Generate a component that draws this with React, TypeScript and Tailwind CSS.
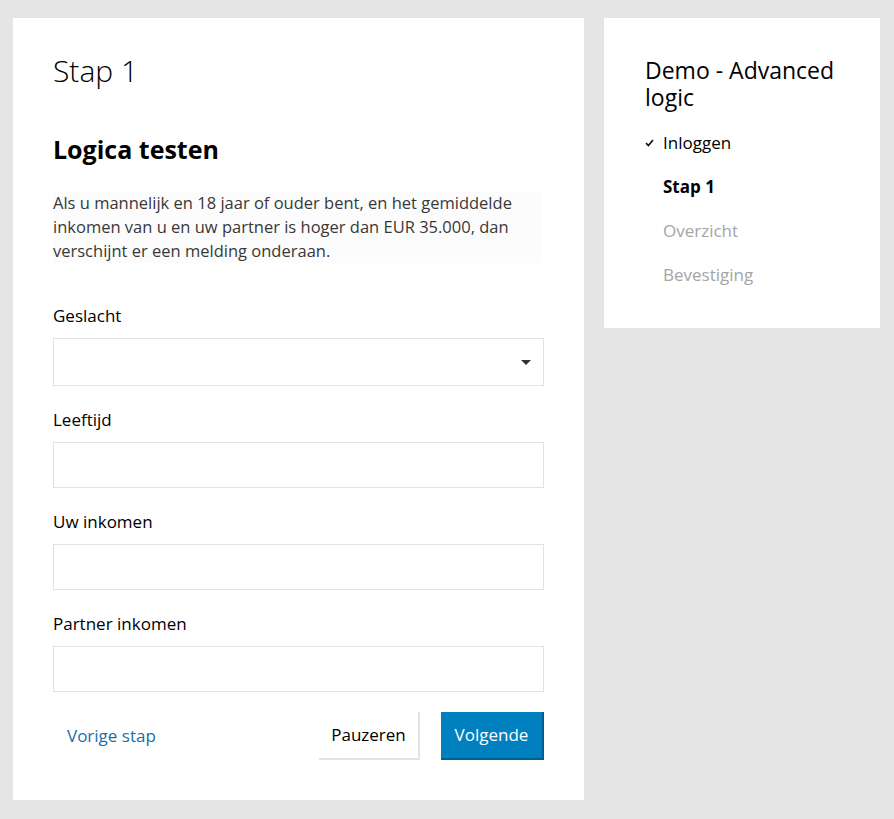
import React from 'react';

const font = { fontFamily: '"Open Sans", "Noto Sans", sans-serif' };

const fields = ['Leeftijd', 'Uw inkomen', 'Partner inkomen'];

const steps = [
  { label: 'Inloggen', state: 'done' },
  { label: 'Stap 1', state: 'current' },
  { label: 'Overzicht', state: 'todo' },
  { label: 'Bevestiging', state: 'todo' },
];

export default function App() {
  return (
    <div className="min-h-[819px] bg-[#e5e5e5]" style={font}>
      <div className="flex items-start gap-5 pl-[13px] pt-[18px]">
        <main className="w-[571px] bg-white px-10 pt-9 pb-10">
          <h1 className="text-[30px] font-light leading-[34px] text-black">Stap 1</h1>
          <h2 className="mt-[45px] text-[25px] font-bold leading-[32px] text-black">Logica testen</h2>
          <p className="mt-[26px] mr-[3px] bg-[#fcfcfc] text-[16.5px] leading-6 text-[#383838]">
            Als u mannelijk en 18 jaar of ouder bent, en het gemiddelde inkomen van u en uw partner is hoger dan EUR
            35.000, dan verschijnt er een melding onderaan.
          </p>

          <div className="mt-[41px]">
            <label className="block text-[17px] leading-6 text-black">Geslacht</label>
            <div className="relative mt-[10px] h-12 border border-[#e2e2e2] bg-white">
              <span className="absolute right-[12px] top-[21px] h-0 w-0 border-x-[5px] border-t-[5px] border-x-transparent border-t-[#333]" />
            </div>
          </div>

          {fields.map((f) => (
            <div key={f} className="mt-[22px]">
              <label className="block text-[17px] leading-6 text-black">{f}</label>
              <div className="mt-[10px] h-[46px] border border-[#e2e2e2] bg-white" />
            </div>
          ))}

          <div className="mt-5 flex items-center">
            <a className="ml-[14px] text-[17px] text-[#1c6ea4]">Vorige stap</a>
            <div className="ml-auto flex gap-[21px]">
              <button className="h-12 w-[101px] border-b-2 border-r-2 border-[#e2e2e2] bg-white text-[17px] text-black">
                Pauzeren
              </button>
              <button className="h-12 w-[103px] border-b-2 border-r-2 border-[#005f93] bg-[#0080bf] text-[17px] font-medium text-white">
                Volgende
              </button>
            </div>
          </div>
        </main>

        <aside className="w-[276px] bg-white pl-[41px] pr-5 pt-[39px] pb-[31px]">
          <h3 className="text-[23px] leading-[27px] text-black">Demo - Advanced logic</h3>
          <ul className="mt-[10px]">
            {steps.map((s) => (
              <li key={s.label} className="flex h-11 items-center text-[17px]">
                <span className="flex w-[18px] items-center">
                  {s.state === 'done' && (
                    <svg width="9" height="8" viewBox="0 0 9 8" fill="none">
                      <path d="M1 4.2 L3.4 6.5 L8 1" stroke="#111" strokeWidth="1.7" />
                    </svg>
                  )}
                </span>
                <span
                  className={
                    s.state === 'current'
                      ? 'font-bold text-black'
                      : s.state === 'done'
                        ? 'text-black'
                        : 'text-[#a5a5a5]'
                  }
                >
                  {s.label}
                </span>
              </li>
            ))}
          </ul>
        </aside>
      </div>
    </div>
  );
}
